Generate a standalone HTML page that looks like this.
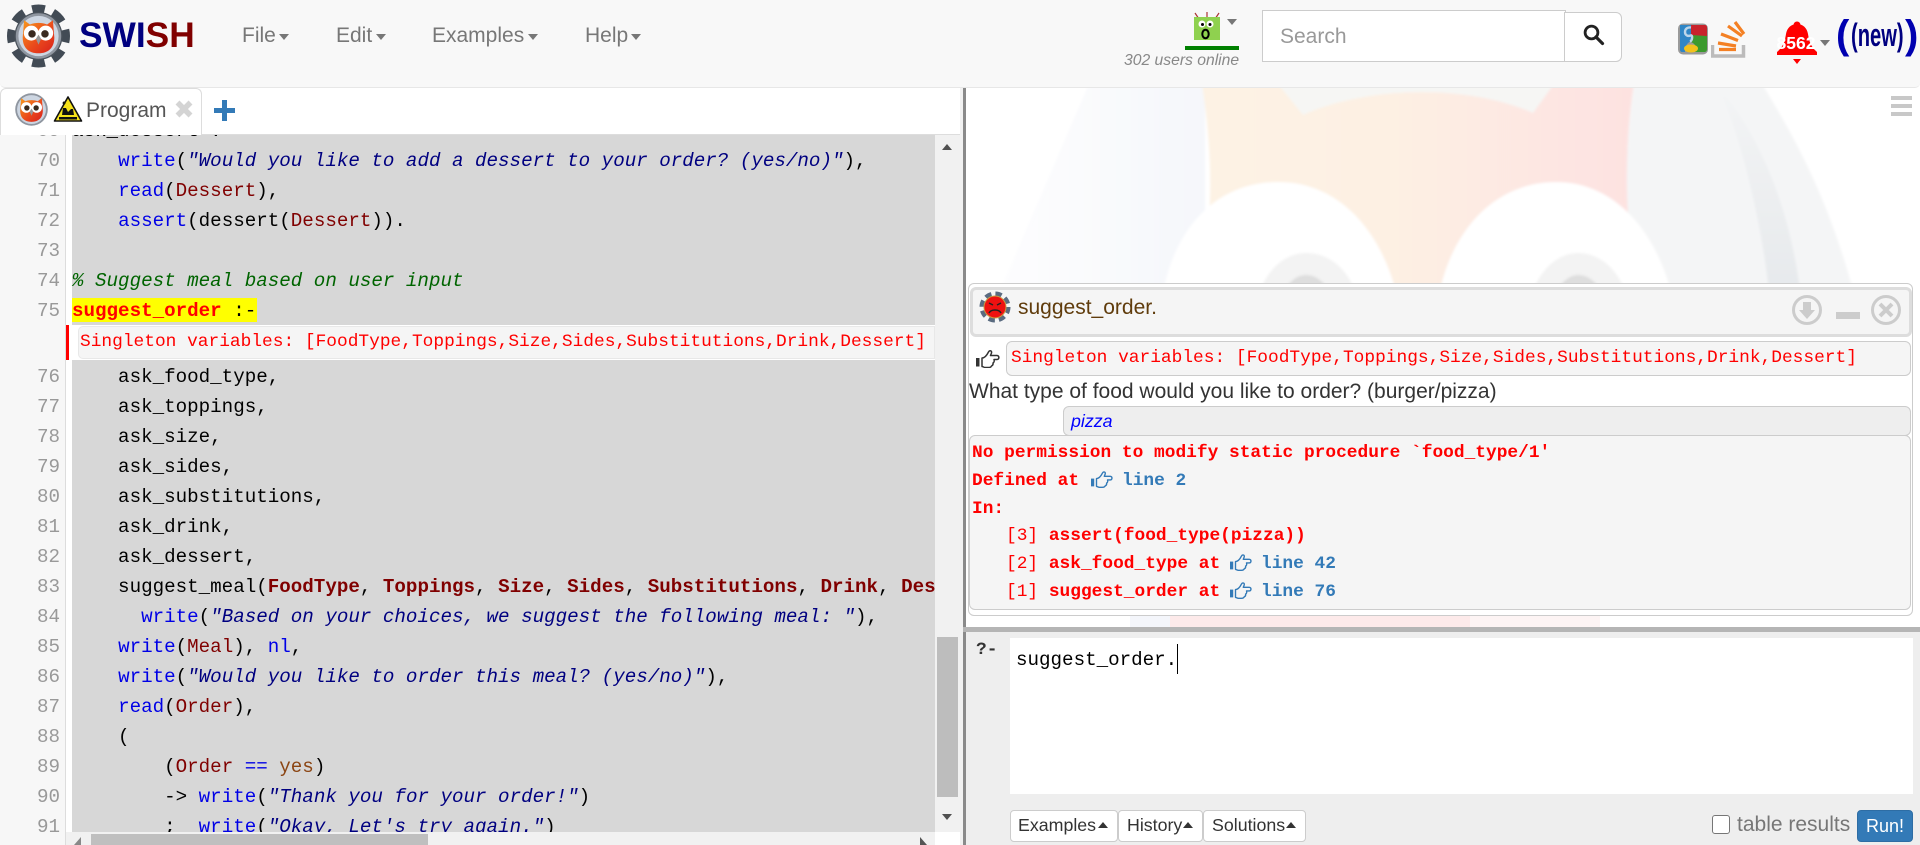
<!DOCTYPE html>
<html><head><meta charset="utf-8"><title>SWISH</title>
<style>
html,body{margin:0;padding:0;width:1920px;height:845px;overflow:hidden;background:#fff}
body{position:relative;font-family:"Liberation Sans",sans-serif;color:#333}
.a{position:absolute}
.t{position:absolute;white-space:pre}
.nav{font-size:21px;color:#777;line-height:24px}
.car{position:absolute;width:0;height:0;border-left:5.5px solid transparent;border-right:5.5px solid transparent;border-top:6px solid #777}
.up{position:absolute;width:0;height:0;border-left:5.5px solid transparent;border-right:5.5px solid transparent;border-bottom:6px solid #333}
.g{position:absolute;left:0;width:60px;text-align:right;font:19.2px/30px "Liberation Mono",monospace;color:#999}
.l{position:absolute;left:72px;white-space:pre;font:19.2px/30px "Liberation Mono",monospace;color:#000}
.b{color:#0000e6}.s{color:#000080;font-style:italic}.v{color:#800000}.vb{color:#800000;font-weight:bold}
.c{color:#006400;font-style:italic}.at{color:#8b4513}
.m{position:absolute;white-space:pre;font:17.85px/28px "Liberation Mono",monospace;color:#f00}
.mb{font-weight:bold}.lk{color:#337ab7;font-weight:bold}
.btn{position:absolute;top:810px;height:30px;background:#fff;border:1px solid #ccc;border-radius:4px}
</style></head><body>
<svg width="0" height="0" style="position:absolute"><defs>
<symbol id="hand" viewBox="0 0 24 18"><rect x="0" y="8" width="3.500" height="8.500" fill="currentColor"/><path d="M6 8C9 8 11 5 12.500 2 13.500 0 16 .5 15.500 3L14.500 5.500H21C23.500 5.500 23.500 9.500 21 9.500H18C18.500 11 18 12.500 17 13 17.300 14.500 16.500 15.500 15.500 16 15 17.300 14 17.500 12.500 17.500H9C8 17.500 7 16.500 6 16.500z" fill="none" stroke="currentColor" stroke-width="1.500" stroke-linejoin="round"/></symbol>
<linearGradient id="ob" x1="0" y1="0" x2="1" y2="1"><stop offset="0" stop-color="#f79a1e"/><stop offset=".55" stop-color="#ea4a1c"/><stop offset="1" stop-color="#d8201c"/></linearGradient>
<symbol id="owl" viewBox="0 0 32 32"><circle cx="16" cy="16" r="15.800" fill="#8f96a0"/><circle cx="16" cy="16" r="14" fill="#cdd6e2"/><path d="M6 5l4 3c4-1.500 8-1.500 12 0l4-3 1 12c0 7-4 11-11 11S5 24 5 17z" fill="url(#ob)"/><circle cx="11" cy="14" r="5.200" fill="#fff"/><circle cx="21" cy="14" r="5.200" fill="#fff"/><circle cx="11.500" cy="14.500" r="2.600" fill="#3a2a20"/><circle cx="20.500" cy="14.500" r="2.600" fill="#3a2a20"/><path d="M16 15l-1.800 3 1.800 4 1.800-4z" fill="#999"/></symbol>
</defs></svg>

<!-- navbar -->
<div class="a" style="left:0;top:0;width:1920px;height:87px;background:#f8f8f8;border-bottom:1px solid #e7e7e7;border-radius:0 0 5px 5px"></div>
<svg class="a" style="left:6px;top:3px" width="66" height="66" viewBox="0 0 66 66">
<circle cx="32.500" cy="33" r="25" fill="none" stroke="#424b55" stroke-width="13" stroke-dasharray="11.600 8" stroke-dashoffset="5.800"/>
<circle cx="32.500" cy="33" r="24" fill="#4a525b"/>
<use href="#owl" x="9.500" y="10" width="46" height="46"/>
</svg>
<div class="t" style="left:79px;top:15px;font-size:35.300px;line-height:42px;font-weight:bold;color:#000080">SWI<span style="color:#800000">SH</span></div>
<div class="t nav" style="left:242px;top:24px">File</div><div class="car" style="left:279px;top:34px"></div>
<div class="t nav" style="left:336px;top:24px">Edit</div><div class="car" style="left:376px;top:34px"></div>
<div class="t nav" style="left:432px;top:24px">Examples</div><div class="car" style="left:528px;top:34px"></div>
<div class="t nav" style="left:585px;top:24px">Help</div><div class="car" style="left:631px;top:34px"></div>

<svg class="a" style="left:1190px;top:11px" width="34" height="32" viewBox="0 0 34 32">
<path d="M5 2l4 6M29 2l-4 6M17 1v6" stroke="#a33" stroke-width="1.200"/>
<rect x="4" y="6" width="26" height="23" fill="#8fd14f"/>
<circle cx="12" cy="13" r="3.500" fill="#fff"/><circle cx="20" cy="13" r="3.500" fill="#fff"/><circle cx="12.500" cy="13.500" r="1.500"/><circle cx="20" cy="13.500" r="1.500"/>
<ellipse cx="15.500" cy="23" rx="3.200" ry="4.200" fill="none" stroke="#000" stroke-width="2"/>
</svg>
<div class="car" style="left:1227px;top:19px"></div>
<div class="a" style="left:1185px;top:46px;width:54px;height:4px;background:#008000"></div>
<div class="t" style="left:1124px;top:51px;font-size:15.700px;line-height:20px;font-style:italic;color:#888">302 users online</div>

<div class="a" style="left:1262px;top:10px;width:302px;height:50px;background:#fff;border:1px solid #ccc"></div>
<div class="t" style="left:1280px;top:24px;font-size:21px;line-height:26px;color:#999">Search</div>
<div class="a" style="left:1564px;top:12px;width:56px;height:48px;background:#fff;border:1px solid #ccc;border-left:1px solid #ccc;border-radius:0 6px 6px 0"></div>
<svg class="a" style="left:1583px;top:24px" width="22" height="22" viewBox="0 0 22 22"><circle cx="8.500" cy="8.500" r="6.400" fill="none" stroke="#222" stroke-width="2.800"/><path d="M13 13l6.500 6.500" stroke="#222" stroke-width="3.200" stroke-linecap="round"/></svg>

<svg class="a" style="left:1677px;top:23px" width="32" height="32" viewBox="0 0 32 32">
<rect x="1" y="0.500" width="30" height="31" rx="5" fill="#9a9a9a"/>
<path d="M3 2h11v16c-4 2-6 5-6 11H5c-1 0-2-1-2-2z" fill="#2f86c6"/><path d="M14 2h14c1 0 2 1 2 2v9l-7 2-9-3z" fill="#c8232c"/><path d="M14 12l16 1v13c0 2-1 3-3 3h-9c2-4 1-8-4-10z" fill="#3c9a2e"/>
<ellipse cx="14" cy="25.500" rx="7" ry="4" fill="#f3c21c"/><path d="M14 4.500c-3-.5-6 1-6 4.500s3 4.500 5.500 3.500 2 5-.5 6" fill="none" stroke="#bcd6ea" stroke-width="2.400"/>
</svg>
<svg class="a" style="left:1711px;top:21px" width="36" height="37" viewBox="0 0 36 37">
<path d="M1.500 24v11h31V24" fill="none" stroke="#bcbbbb" stroke-width="3.500"/>
<path d="M8 28.500h17M7 22l18 3M10 13l17 6.500M17 5l14 10M24 1l9 12" stroke="#f48024" stroke-width="3.200" fill="none"/>
</svg>
<svg class="a" style="left:1777px;top:21px" width="42" height="44" viewBox="0 0 42 44">
<circle cx="20" cy="4" r="3.500" fill="#f00"/><path d="M20 3c6 0 10 4 11 10 1 6 2 12 9 18v3H0v-3c7-6 8-12 9-18 1-6 5-10 11-10z" fill="#f00"/><path d="M16 38h8l-4 5z" fill="#f00"/>
</svg>
<div class="t" style="left:1775px;top:33px;width:42px;text-align:center;font-size:17.500px;line-height:20px;font-weight:bold;color:#fff">8562</div>
<div class="car" style="left:1820px;top:40px"></div>
<div class="t" style="left:1836px;top:13px;font-size:40px;line-height:44px;font-weight:bold;color:#0000b0">(</div>
<div class="t" style="left:1851px;top:17px;font-size:32px;line-height:36px;font-weight:bold;color:#000080;transform:scaleX(.63);transform-origin:0 0">(new)</div>
<div class="t" style="left:1905px;top:13px;font-size:40px;line-height:44px;font-weight:bold;color:#0000b0">)</div>

<!-- tab bar -->
<div class="a" style="left:0;top:134px;width:960px;height:1px;background:#ddd"></div>
<div class="a" style="left:0;top:88px;width:202px;height:47px;background:#fff;border:1px solid #ddd;border-bottom:none;border-radius:6px 6px 0 0;box-sizing:border-box"></div>
<svg class="a" style="left:15px;top:93px" width="33" height="33"><use href="#owl" width="33" height="33"/></svg>
<svg class="a" style="left:53px;top:95px" width="30" height="28" viewBox="0 0 30 28"><path d="M15 2L28.500 26H1.500z" fill="#f5e21a" stroke="#111" stroke-width="1.600" stroke-linejoin="round"/><path d="M11 9.500a1.500 1.500 0 1 1 .1 0zM9 20l1-7h3l2 4 3-3h2l1 6z" fill="#111"/><rect x="6" y="22" width="18" height="2.500" fill="#111"/></svg>
<div class="t" style="left:86px;top:98px;font-size:21px;line-height:26px;color:#555">Program</div>
<svg class="a" style="left:175px;top:100px" width="18" height="18" viewBox="0 0 18 18"><path d="M2.500 2.500l13 13M15.500 2.500l-13 13" stroke="#d4d4d4" stroke-width="5.500"/></svg>
<svg class="a" style="left:214px;top:100px" width="21" height="21" viewBox="0 0 21 21"><path d="M8 0h5v8h8v5h-8v8H8v-8H0V8h8z" fill="#337ab7"/></svg>

<!-- editor -->
<div class="a" style="left:0;top:135px;width:65px;height:710px;background:#f7f7f7;border-right:1px solid #ddd"></div>
<div class="a" style="left:72px;top:135px;width:863px;height:697px;background:#d7d7d7"></div>
<div class="a" style="left:0;top:135px;width:935px;height:697px;overflow:hidden">
<div style="position:absolute;left:72px;top:163px;width:185px;height:24px;background:#ff0"></div>
<div class="g" style="top:-19px">69</div><div class="l" style="top:-19px">ask_dessert :-</div>
<div class="g" style="top:11px">70</div><div class="l" style="top:11px">    <span class="b">write</span>(<span class="s">"Would you like to add a dessert to your order? (yes/no)"</span>),</div>
<div class="g" style="top:41px">71</div><div class="l" style="top:41px">    <span class="b">read</span>(<span class="v">Dessert</span>),</div>
<div class="g" style="top:71px">72</div><div class="l" style="top:71px">    <span class="b">assert</span>(dessert(<span class="v">Dessert</span>)).</div>
<div class="g" style="top:101px">73</div>
<div class="g" style="top:131px">74</div><div class="l c" style="top:131px">% Suggest meal based on user input</div>
<div class="g" style="top:161px">75</div><div class="l" style="top:161px"><span style="color:#f00;font-weight:bold">suggest_order</span> :-</div>
<div class="a" style="left:66px;top:190px;width:3px;height:35px;background:#f00"></div>
<div class="a" style="left:69px;top:190px;width:866px;height:35px;background:#fff"></div>
<div class="a" style="left:78px;top:191px;width:857px;height:33px;background:#f5f5f5;border:1px solid #e8e8e8;border-radius:5px 0 0 5px;box-sizing:border-box"></div>
<div class="m" style="left:80px;top:193px">Singleton variables: [FoodType,Toppings,Size,Sides,Substitutions,Drink,Dessert]</div>
<div class="g" style="top:227px">76</div><div class="l" style="top:227px">    ask_food_type,</div>
<div class="g" style="top:257px">77</div><div class="l" style="top:257px">    ask_toppings,</div>
<div class="g" style="top:287px">78</div><div class="l" style="top:287px">    ask_size,</div>
<div class="g" style="top:317px">79</div><div class="l" style="top:317px">    ask_sides,</div>
<div class="g" style="top:347px">80</div><div class="l" style="top:347px">    ask_substitutions,</div>
<div class="g" style="top:377px">81</div><div class="l" style="top:377px">    ask_drink,</div>
<div class="g" style="top:407px">82</div><div class="l" style="top:407px">    ask_dessert,</div>
<div class="g" style="top:437px">83</div><div class="l" style="top:437px">    suggest_meal(<span class="vb">FoodType</span>, <span class="vb">Toppings</span>, <span class="vb">Size</span>, <span class="vb">Sides</span>, <span class="vb">Substitutions</span>, <span class="vb">Drink</span>, <span class="vb">Dessert</span>, <span class="v">Meal</span>),</div>
<div class="g" style="top:467px">84</div><div class="l" style="top:467px">      <span class="b">write</span>(<span class="s">"Based on your choices, we suggest the following meal: "</span>),</div>
<div class="g" style="top:497px">85</div><div class="l" style="top:497px">    <span class="b">write</span>(<span class="v">Meal</span>), <span class="b">nl</span>,</div>
<div class="g" style="top:527px">86</div><div class="l" style="top:527px">    <span class="b">write</span>(<span class="s">"Would you like to order this meal? (yes/no)"</span>),</div>
<div class="g" style="top:557px">87</div><div class="l" style="top:557px">    <span class="b">read</span>(<span class="v">Order</span>),</div>
<div class="g" style="top:587px">88</div><div class="l" style="top:587px">    (</div>
<div class="g" style="top:617px">89</div><div class="l" style="top:617px">        (<span class="v">Order</span> <span class="b">==</span> <span class="at">yes</span>)</div>
<div class="g" style="top:647px">90</div><div class="l" style="top:647px">        -&gt; <span class="b">write</span>(<span class="s">"Thank you for your order!"</span>)</div>
<div class="g" style="top:677px">91</div><div class="l" style="top:677px">        ;  <span class="b">write</span>(<span class="s">"Okay, Let's try again."</span>)</div>
</div>
<!-- scrollbars -->
<div class="a" style="left:935px;top:135px;width:25px;height:697px;background:#f1f1f1"></div>
<div class="a" style="left:937px;top:637px;width:21px;height:160px;background:#bdbdbd"></div>
<div class="a" style="left:942px;top:144px;width:0;height:0;border-left:5.500px solid transparent;border-right:5.500px solid transparent;border-bottom:6px solid #505050"></div>
<div class="a" style="left:942px;top:814px;width:0;height:0;border-left:5.500px solid transparent;border-right:5.500px solid transparent;border-top:6px solid #505050"></div>
<div class="a" style="left:66px;top:832px;width:869px;height:13px;background:#f1f1f1"></div>
<div class="a" style="left:91px;top:834px;width:337px;height:11px;background:#bfbfbf"></div>
<svg class="a" style="left:72px;top:837px" width="12" height="8"><path d="M9 0v8H2z" fill="#888"/></svg>
<svg class="a" style="left:919px;top:837px" width="12" height="8"><path d="M1 0v8h7z" fill="#555"/></svg>

<!-- splitters -->
<div class="a" style="left:960px;top:88px;width:3px;height:757px;background:#f1f1f1"></div>
<div class="a" style="left:963px;top:88px;width:3px;height:757px;background:#8a8a8a"></div>

<!-- right background owl -->
<svg class="a" style="left:966px;top:88px" width="954" height="540" viewBox="966 88 954 540">
<defs><linearGradient id="og" x1="0" x2="1" y1="0" y2="0"><stop offset="0" stop-color="#fdf3e4"/><stop offset=".45" stop-color="#fdf0e3"/><stop offset=".75" stop-color="#fde5e2"/><stop offset="1" stop-color="#fddfdf"/></linearGradient>
<linearGradient id="bl" x1="0" x2="1" y1="0" y2="0"><stop offset="0" stop-color="#fdfdfe"/><stop offset="1" stop-color="#f5f7fb"/></linearGradient>
<linearGradient id="sg" x1="0" x2="0" y1="0" y2="1"><stop offset="0" stop-color="#f3f4f5"/><stop offset="1" stop-color="#dfe3e7"/></linearGradient>
<filter id="bb"><feGaussianBlur stdDeviation="1.200"/></filter></defs>
<rect x="966" y="88" width="954" height="540" fill="#fff"/>
<g filter="url(#bb)">
<path d="M1089 84L1003 283V400H1205V84z" fill="url(#bl)"/>
<path d="M1202 84C1212 150 1214 210 1202 270 1190 300 1150 283 1143 400H1700C1680 330 1640 270 1634 250 1625 200 1625 140 1634 84z" fill="url(#og)"/>
<path d="M1634 84C1625 150 1624 200 1634 270 1650 290 1680 340 1700 400H1851V283C1825 190 1790 130 1762 84z" fill="#f4f5f6"/>
<path d="M1722 96C1745 150 1762 230 1768 283V400H1799V283C1790 220 1768 150 1726 96z" fill="url(#sg)"/>
<path d="M1278 84L1303 115C1370 85 1470 85 1533 113L1554 84z" fill="#f6f6f4"/>
<path d="M1162 300C1172 230 1215 182 1278 182 1345 182 1385 240 1398 300V400H1162z" fill="#fff"/>
<path d="M1438 300C1450 230 1495 182 1556 182 1620 182 1660 240 1673 300V400H1438z" fill="#fff"/>
<path d="M1257 300C1265 270 1285 253 1306 253 1330 253 1350 270 1358 300z" fill="#f3f3f3"/>
<path d="M1530 300C1538 270 1558 253 1578 253 1600 253 1620 270 1628 300z" fill="#f3f3f3"/>
<path d="M1280 300C1285 285 1295 275 1306 275 1318 275 1328 285 1333 300z" fill="#dedede"/>
<path d="M1552 300C1558 285 1568 275 1578 275 1590 275 1600 285 1605 300z" fill="#dedede"/>
</g>
<rect x="1130" y="610" width="40" height="18" fill="#f4f6fb"/><rect x="1170" y="610" width="300" height="18" fill="#fdeaea"/><rect x="1470" y="610" width="130" height="18" fill="#fdf4f4"/>
</svg>
<div class="a" style="left:1891px;top:96px;width:21px;height:4px;background:#c8c8c8"></div>
<div class="a" style="left:1891px;top:104px;width:21px;height:4px;background:#c8c8c8"></div>
<div class="a" style="left:1891px;top:112px;width:21px;height:4px;background:#c8c8c8"></div>

<!-- answer panel -->
<div class="a" style="left:968px;top:283px;width:945px;height:333px;background:#fff;border:1px solid #ccc;border-radius:6px;box-sizing:border-box"></div>
<div class="a" style="left:970px;top:287px;width:942px;height:50px;background:#f5f5f5;border:3px solid #ddd;border-radius:6px;box-sizing:border-box"></div>
<svg class="a" style="left:979px;top:291px" width="32" height="32" viewBox="0 0 32 32">
<circle cx="16" cy="16" r="12.500" fill="none" stroke="#5a6b80" stroke-width="6" stroke-dasharray="6 3.820"/>
<circle cx="16" cy="16" r="11" fill="#ee1111" stroke="#c99a40" stroke-width="1"/>
<path d="M10 12l4 2M22 12l-4 2" stroke="#222" stroke-width="1.500"/><path d="M10 22c2-4 10-4 12 0" fill="none" stroke="#222" stroke-width="1.500"/>
</svg>
<div class="t" style="left:1018px;top:295px;font-size:21px;line-height:26px;color:#603c0c">suggest_order.</div>
<svg class="a" style="left:1792px;top:295px" width="110" height="30" viewBox="0 0 110 30">
<circle cx="15" cy="15" r="13.500" fill="none" stroke="#ccc" stroke-width="3"/><path d="M11 7h8v8h4l-8 9-8-9h4z" fill="#ccc"/>
<rect x="44" y="17" width="24" height="7" fill="#ccc"/>
<circle cx="94" cy="15" r="13.500" fill="none" stroke="#ccc" stroke-width="3"/><path d="M88 9l12 12M100 9L88 21" stroke="#ccc" stroke-width="4"/>
</svg>
<svg class="a" style="left:976px;top:350px;color:#333" width="24" height="18"><use href="#hand" width="24" height="18"/></svg>
<div class="a" style="left:1006px;top:341px;width:905px;height:35px;background:#f5f5f5;border:1px solid #ccc;border-radius:6px;box-sizing:border-box"></div>
<div class="m" style="left:1011px;top:344px">Singleton variables: [FoodType,Toppings,Size,Sides,Substitutions,Drink,Dessert]</div>
<div class="t" style="left:969px;top:379px;font-size:21px;line-height:26px;color:#333">What type of food would you like to order? (burger/pizza)</div>
<div class="a" style="left:1063px;top:406px;width:848px;height:30px;background:#eee;border:1px solid #ccc;border-radius:6px;box-sizing:border-box"></div>
<div class="t" style="left:1071px;top:409px;font-size:17.8px;line-height:24px;font-style:italic;color:#00f">pizza</div>
<div class="a" style="left:969px;top:435px;width:942px;height:175px;background:#f5f5f5;border:1px solid #ccc;border-radius:6px;box-sizing:border-box"></div>
<div class="m mb" style="left:972px;top:439px">No permission to modify static procedure `food_type/1'</div>
<div class="m mb" style="left:972px;top:467px">Defined at</div><div class="m lk" style="left:1122px;top:467px">line 2</div>
<svg class="a" style="left:1091px;top:471px;color:#337ab7" width="22" height="17"><use href="#hand" width="22" height="17"/></svg>
<div class="m mb" style="left:972px;top:495px">In:</div>
<div class="m" style="left:1006px;top:522px">[3] <span class="mb">assert(food_type(pizza))</span></div>
<div class="m" style="left:1006px;top:550px">[2] <span class="mb">ask_food_type at</span></div><div class="m lk" style="left:1261px;top:550px">line 42</div>
<svg class="a" style="left:1230px;top:554px;color:#337ab7" width="22" height="17"><use href="#hand" width="22" height="17"/></svg>
<div class="m" style="left:1006px;top:578px">[1] <span class="mb">suggest_order at</span></div><div class="m lk" style="left:1261px;top:578px">line 76</div>
<svg class="a" style="left:1230px;top:582px;color:#337ab7" width="22" height="17"><use href="#hand" width="22" height="17"/></svg>

<!-- query -->
<div class="a" style="left:966px;top:627px;width:954px;height:218px;background:#eee"></div>
<div class="a" style="left:963px;top:627px;width:957px;height:5px;background:#b5b5b5"></div>
<div class="t" style="left:976px;top:636px;font:bold 17.85px/28px 'Liberation Mono',monospace;color:#333">?-</div>
<div class="a" style="left:1010px;top:638px;width:903px;height:156px;background:#fff"></div>
<div class="l" style="left:1016px;top:645px">suggest_order.</div>
<div class="a" style="left:1177px;top:644px;width:1px;height:30px;background:#000"></div>
<div class="btn" style="left:1010px;width:106px"></div>
<div class="t" style="left:1018px;top:814px;font-size:17.8px;line-height:22px">Examples</div><div class="up" style="left:1098px;top:822px"></div>
<div class="btn" style="left:1118px;width:83px"></div>
<div class="t" style="left:1127px;top:814px;font-size:17.8px;line-height:22px">History</div><div class="up" style="left:1183px;top:822px"></div>
<div class="btn" style="left:1203px;width:101px"></div>
<div class="t" style="left:1212px;top:814px;font-size:17.8px;line-height:22px">Solutions</div><div class="up" style="left:1286px;top:822px"></div>
<div class="a" style="left:1712px;top:815px;width:18px;height:19px;background:#fff;border:1px solid #767676;border-radius:3px;box-sizing:border-box"></div>
<div class="t" style="left:1737px;top:812px;font-size:21px;line-height:26px;color:#777">table results</div>
<div class="a" style="left:1857px;top:810px;width:56px;height:32px;background:#337ab7;border:1px solid #2e6da4;border-radius:4px;box-sizing:border-box"></div>
<div class="t" style="left:1866px;top:814px;font-size:18px;line-height:24px;color:#fff">Run!</div>
</body></html>
